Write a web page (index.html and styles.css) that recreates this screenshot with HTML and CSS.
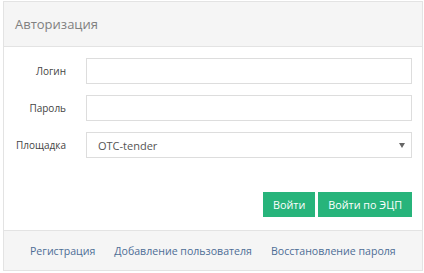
FILE: index.html
```html
<!DOCTYPE html>
<html lang="ru">
<head>
<meta charset="utf-8">
<link rel="stylesheet" href="styles.css">
</head>
<body>
<div class="panel">
  <div class="panel-heading">Авторизация</div>
  <div class="panel-body">
    <div class="row">
      <label class="label">Логин</label>
      <div class="control"><input class="input" type="text"></div>
    </div>
    <div class="row">
      <label class="label">Пароль</label>
      <div class="control"><input class="input" type="password"></div>
    </div>
    <div class="row">
      <label class="label">Площадка</label>
      <div class="control select">
        <span class="select-text">OTC-tender</span>
        <span class="caret"></span>
      </div>
    </div>
    <div class="actions">
      <button class="btn">Войти</button>
      <button class="btn">Войти по ЭЦП</button>
    </div>
  </div>
  <div class="panel-footer">
    <a class="link">Регистрация</a>
    <a class="link">Добавление пользователя</a>
    <a class="link">Восстановление пароля</a>
  </div>
</div>
</body>
</html>
```
FILE: styles.css
```css
html, body {
  margin: 0;
  padding: 0;
  background: #fff;
}
body {
  font-family: "Open Sans", "Liberation Sans", sans-serif;
  padding: 1px 2px 0 3px;
}
.panel {
  width: 418px;
  height: 268px;
  border: 1px solid #e3e3e3;
  display: flex;
  flex-direction: column;
}
.panel-heading {
  height: 44px;
  background: #f5f5f5;
  border-bottom: 1px solid #e3e3e3;
  color: #808080;
  font-size: 13px;
  font-weight: 400;
  padding-left: 11px;
  display: flex;
  align-items: center;
}
.panel-body {
  flex: 1;
  padding: 11px 10px 0 0;
  display: flex;
  flex-direction: column;
  gap: 11px;
}
.row {
  display: flex;
  align-items: center;
}
.label {
  width: 62px;
  padding-right: 20px;
  text-align: right;
  font-size: 10px;
  font-weight: 400;
  color: #444;
}
.control {
  flex: 1;
  height: 24px;
  border: 1px solid #ddd;
  box-sizing: content-box;
}
.input {
  display: block;
  width: 100%;
  height: 100%;
  border: 0;
  padding: 0;
  margin: 0;
  outline: none;
}
.select {
  display: flex;
  align-items: center;
  justify-content: space-between;
  padding: 0 6px 0 11px;
}
.select-text {
  font-size: 11px;
  color: #555;
}
.caret {
  width: 0;
  height: 0;
  border-left: 3px solid transparent;
  border-right: 3px solid transparent;
  border-top: 5px solid #666;
}
.actions {
  margin-top: 23px;
  display: flex;
  justify-content: flex-end;
  gap: 3px;
}
.btn {
  height: 25px;
  border: 0;
  background: #27b47b;
  color: #fff;
  font-family: "Open Sans", "Liberation Sans", sans-serif;
  font-size: 10.8px;
  font-weight: 400;
  padding: 0 10px;
}
.panel-footer {
  height: 39px;
  background: #f5f5f5;
  border-top: 1px solid #e3e3e3;
  display: flex;
  align-items: center;
  padding-left: 26px;
  gap: 19px;
}
.link {
  color: #4d6d96;
  font-size: 10.6px;
}
```
